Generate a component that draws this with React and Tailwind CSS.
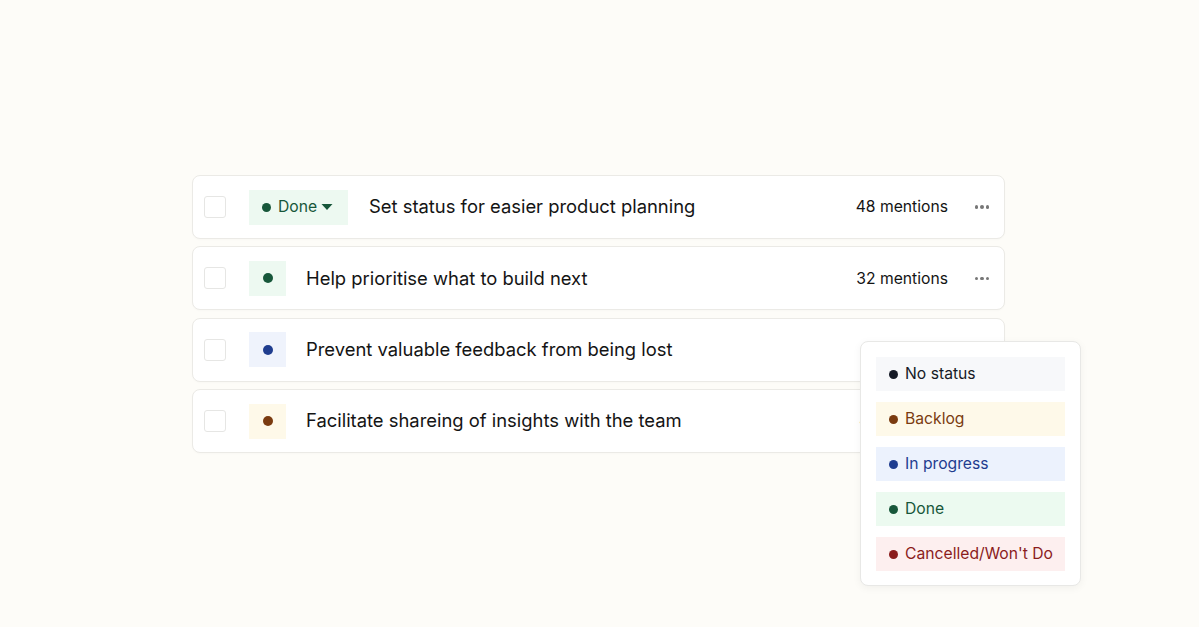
import React from 'react';

const font = { fontFamily: 'Inter, "Noto Sans", sans-serif' };

const rows = [
  { chip: 'done', label: 'Done', text: 'Set status for easier product planning', mentions: '48 mentions', menu: true },
  { chip: 'done', text: 'Help prioritise what to build next', mentions: '32 mentions', menu: true },
  { chip: 'progress', text: 'Prevent valuable feedback from being lost' },
  { chip: 'backlog', text: 'Facilitate shareing of insights with the team', mentions: '41 mentions' },
];

const chipStyles = {
  done: { bg: 'bg-[#edf9f1]', dot: 'bg-[#17573a]' },
  progress: { bg: 'bg-[#eff3fc]', dot: 'bg-[#1f3d8f]' },
  backlog: { bg: 'bg-[#fef9e9]', dot: 'bg-[#7a3b10]' },
};

const options = [
  { label: 'No status', bg: 'bg-[#f7f8fa]', dot: 'bg-[#161a26]', text: 'text-[#161a26]' },
  { label: 'Backlog', bg: 'bg-[#fef9e9]', dot: 'bg-[#7a3b10]', text: 'text-[#7a3b10]' },
  { label: 'In progress', bg: 'bg-[#ecf2fd]', dot: 'bg-[#1f3d8f]', text: 'text-[#1f3d8f]' },
  { label: 'Done', bg: 'bg-[#ecfaf0]', dot: 'bg-[#17573a]', text: 'text-[#17573a]' },
  { label: "Cancelled/Won't Do", bg: 'bg-[#fdefef]', dot: 'bg-[#8b1c1c]', text: 'text-[#8b1c1c]' },
];

function Row({ r }) {
  const c = chipStyles[r.chip];
  return (
    <div className="h-[64px] w-[813px] rounded-lg border border-[#ebeae6] bg-white flex items-center shadow-[0_1px_2px_rgba(0,0,0,0.02)]">
      <div className="ml-[11px] w-[22px] h-[22px] rounded-[3px] border border-[#e6e6e4]" />
      {r.label ? (
        <div className={`ml-[23px] h-[35px] w-[99px] ${c.bg} flex items-center pl-[13px]`}>
          <span className={`w-[9px] h-[9px] rounded-full ${c.dot}`} />
          <span className="ml-[7px] text-[15.7px] text-[#17573a]">{r.label}</span>
          <svg className="ml-[4px]" width="12" height="8" viewBox="0 0 12 8"><path d="M0.5 1 L11.5 1 L6 7 Z" fill="#17573a" /></svg>
        </div>
      ) : (
        <div className={`ml-[23px] h-[35px] w-[37px] ${c.bg} flex items-center justify-center`}>
          <span className={`w-[10px] h-[10px] rounded-full ${c.dot}`} />
        </div>
      )}
      <span className={`${r.label ? 'ml-[21px]' : 'ml-[20px]'} text-[18.4px] text-[#141414]`}>{r.text}</span>
      <div className="ml-auto flex items-center pr-[14px]">
        {r.mentions && <span className="text-[15.7px] text-[#141414]">{r.mentions}</span>}
        <div className="ml-[26px] w-[16px] flex gap-[2px] justify-center">
          {r.menu && [0, 1, 2].map((i) => <span key={i} className="w-[3.5px] h-[3.5px] rounded-full bg-[#777]" />)}
        </div>
      </div>
    </div>
  );
}

export default function App() {
  return (
    <div className="relative w-[1199px] h-[627px] bg-[#fdfcf8] overflow-hidden" style={font}>
      <div className="pt-[175px] pl-[192px] flex flex-col gap-[7.4px]">
        {rows.map((r, i) => <Row key={i} r={r} />)}
      </div>

      <div className="absolute left-[860px] top-[341px] w-[221px] h-[245px] rounded-lg border border-[#e8e8e6] bg-white shadow-[0_2px_8px_rgba(0,0,0,0.05)] px-[15px] pt-[15px] flex flex-col gap-[11px]">
        {options.map((o) => (
          <div key={o.label} className={`h-[34px] ${o.bg} flex items-center pl-[13px]`}>
            <span className={`w-[9px] h-[9px] rounded-full ${o.dot}`} />
            <span className={`ml-[7px] text-[15.7px] ${o.text}`}>{o.label}</span>
          </div>
        ))}
      </div>
    </div>
  );
}
